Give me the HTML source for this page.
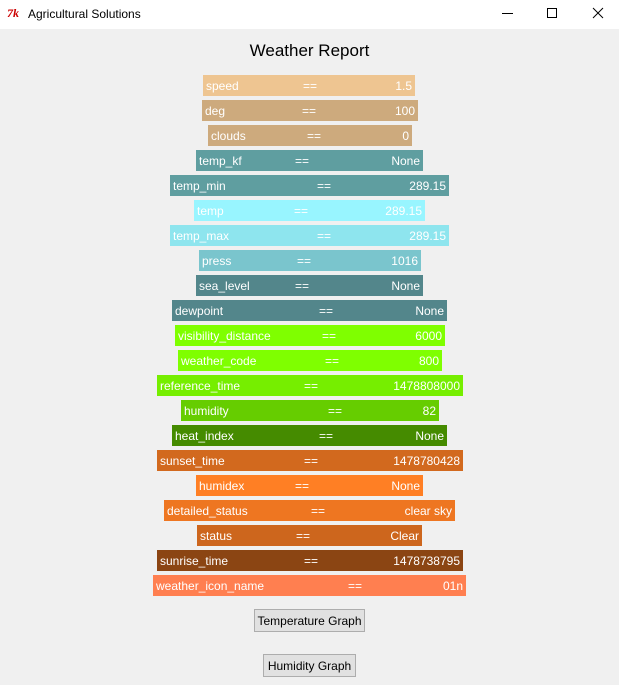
<!DOCTYPE html>
<html><head><meta charset="utf-8"><style>
body{margin:0;width:619px;height:685px;background:#f0f0f0;position:relative;overflow:hidden;font-family:"Liberation Sans",sans-serif}
.tb{position:absolute;left:0;top:0;width:619px;height:29px;background:#fff}
.tt{position:absolute;left:28px;top:7px;font-size:12px;color:#000}
.ic{position:absolute;left:7px;top:6px;font-size:12px;color:#c00;font-style:italic;font-weight:bold;font-family:"Liberation Serif",serif}
.h{position:absolute;top:41px;left:0;width:619px;text-align:center;font-size:17px;color:#000}
.r{position:absolute;height:21px;color:#fff;font-size:12px;line-height:23px}
.r .l{position:absolute;left:3px}
.r .v{position:absolute;right:3px}
.r .e{position:absolute}
.b{position:absolute;background:#e1e1e1;border:1px solid #adadad;font-size:12px;text-align:center;line-height:22px;color:#000;box-sizing:border-box}
</style></head><body>
<div class="tb"><span class="ic">7k</span><span class="tt">Agricultural Solutions</span>
<svg style="position:absolute;left:490px;top:0" width="129" height="29">
<line x1="12" y1="13.5" x2="23" y2="13.5" stroke="#000"/>
<rect x="57.5" y="8.5" width="9" height="9" fill="none" stroke="#000"/>
<line x1="103" y1="8" x2="113" y2="18" stroke="#000"/><line x1="113" y1="8" x2="103" y2="18" stroke="#000"/>
</svg></div>
<div class="h">Weather Report</div>

<div class="r" style="top:75px;left:203px;width:212px;background:#eec591"><span class="l">speed</span><span class="e" style="left:100px">==</span><span class="v">1.5</span></div>
<div class="r" style="top:100px;left:202px;width:216px;background:#cdaa7d"><span class="l">deg</span><span class="e" style="left:100px">==</span><span class="v">100</span></div>
<div class="r" style="top:125px;left:208px;width:204px;background:#cdaa7d"><span class="l">clouds</span><span class="e" style="left:99px">==</span><span class="v">0</span></div>
<div class="r" style="top:150px;left:196px;width:227px;background:#5f9ea0"><span class="l">temp_kf</span><span class="e" style="left:99px">==</span><span class="v">None</span></div>
<div class="r" style="top:175px;left:170px;width:279px;background:#5f9ea0"><span class="l">temp_min</span><span class="e" style="left:147px">==</span><span class="v">289.15</span></div>
<div class="r" style="top:200px;left:194px;width:231px;background:#98f5ff"><span class="l">temp</span><span class="e" style="left:100px">==</span><span class="v">289.15</span></div>
<div class="r" style="top:225px;left:170px;width:279px;background:#8ee5ee"><span class="l">temp_max</span><span class="e" style="left:147px">==</span><span class="v">289.15</span></div>
<div class="r" style="top:250px;left:199px;width:222px;background:#7ac5cd"><span class="l">press</span><span class="e" style="left:98px">==</span><span class="v">1016</span></div>
<div class="r" style="top:275px;left:196px;width:227px;background:#53868b"><span class="l">sea_level</span><span class="e" style="left:99px">==</span><span class="v">None</span></div>
<div class="r" style="top:300px;left:172px;width:275px;background:#53868b"><span class="l">dewpoint</span><span class="e" style="left:147px">==</span><span class="v">None</span></div>
<div class="r" style="top:325px;left:175px;width:270px;background:#7fff00"><span class="l">visibility_distance</span><span class="e" style="left:147px">==</span><span class="v">6000</span></div>
<div class="r" style="top:350px;left:178px;width:264px;background:#7fff00"><span class="l">weather_code</span><span class="e" style="left:147px">==</span><span class="v">800</span></div>
<div class="r" style="top:375px;left:157px;width:306px;background:#76ee00"><span class="l">reference_time</span><span class="e" style="left:147px">==</span><span class="v">1478808000</span></div>
<div class="r" style="top:400px;left:181px;width:258px;background:#66cd00"><span class="l">humidity</span><span class="e" style="left:147px">==</span><span class="v">82</span></div>
<div class="r" style="top:425px;left:172px;width:275px;background:#458b00"><span class="l">heat_index</span><span class="e" style="left:147px">==</span><span class="v">None</span></div>
<div class="r" style="top:450px;left:157px;width:306px;background:#d2691e"><span class="l">sunset_time</span><span class="e" style="left:147px">==</span><span class="v">1478780428</span></div>
<div class="r" style="top:475px;left:196px;width:227px;background:#ff7f24"><span class="l">humidex</span><span class="e" style="left:99px">==</span><span class="v">None</span></div>
<div class="r" style="top:500px;left:164px;width:291px;background:#ee7621"><span class="l">detailed_status</span><span class="e" style="left:147px">==</span><span class="v">clear sky</span></div>
<div class="r" style="top:525px;left:197px;width:225px;background:#cd661d"><span class="l">status</span><span class="e" style="left:99px">==</span><span class="v">Clear</span></div>
<div class="r" style="top:550px;left:157px;width:306px;background:#8b4513"><span class="l">sunrise_time</span><span class="e" style="left:147px">==</span><span class="v">1478738795</span></div>
<div class="r" style="top:575px;left:153px;width:313px;background:#ff7f50"><span class="l">weather_icon_name</span><span class="e" style="left:195px">==</span><span class="v">01n</span></div>

<div class="b" style="left:254px;top:609px;width:111px;height:23px">Temperature Graph</div>
<div class="b" style="left:263px;top:654px;width:93px;height:23px">Humidity Graph</div>
</body></html>
